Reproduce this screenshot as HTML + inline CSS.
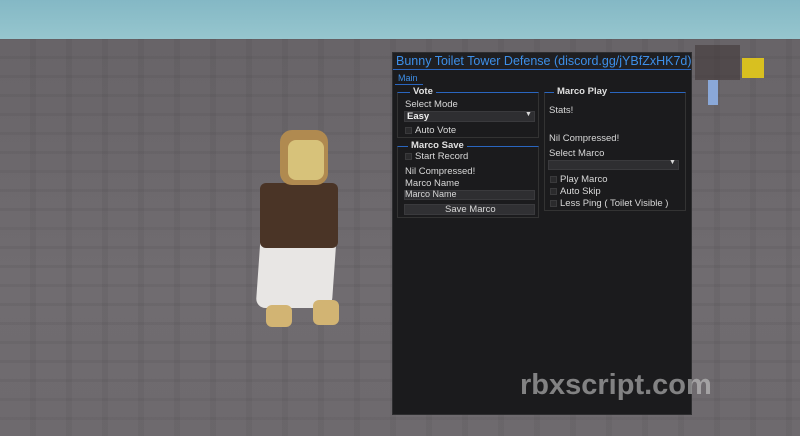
<!DOCTYPE html>
<html><head><style>
*{margin:0;padding:0;box-sizing:border-box}
body{width:800px;height:436px;overflow:hidden;position:relative;background:#6b676b;font-family:"Liberation Sans",sans-serif}
.a{position:absolute}
.t{color:#d8d8d8;font-size:9.5px;position:absolute;white-space:nowrap}
.cb{position:absolute;width:7px;height:7px;background:#2a2a2c;border:1px solid #3a3a3c}
.dd{position:absolute;background:#2e2e31;border:1px solid #3a3a3d}
</style></head><body>
<div class="a" style="left:0;top:0;width:800px;height:39px;background:linear-gradient(#84b8c5,#96c6ce)"></div>
<div class="a" style="left:0;top:39px;width:800px;height:397px;background:
repeating-linear-gradient(90deg,transparent 0 30px,rgba(50,48,50,.08) 30px 36px),
repeating-linear-gradient(0deg,transparent 0 16px,rgba(50,48,50,.08) 16px 19px),
linear-gradient(#686468,#706c70 60%,#6e6a6e)"></div>
<div class="a" style="left:258px;top:240px;width:76px;height:68px;background:#e8e6e4;border-radius:4px 4px 10px 10px;transform:skewX(-4deg)"></div>
<div class="a" style="left:260px;top:183px;width:78px;height:65px;background:#4a3426;border-radius:6px"></div>
<div class="a" style="left:280px;top:130px;width:48px;height:55px;background:#b08a50;border-radius:12px"></div>
<div class="a" style="left:288px;top:140px;width:36px;height:40px;background:#d7c27a;border-radius:8px"></div>
<div class="a" style="left:266px;top:305px;width:26px;height:22px;background:#d2b473;border-radius:6px"></div>
<div class="a" style="left:313px;top:300px;width:26px;height:25px;background:#d2b473;border-radius:6px"></div>
<div class="a" style="left:695px;top:45px;width:45px;height:35px;background:#3a3030;opacity:.5"></div>
<div class="a" style="left:742px;top:58px;width:22px;height:20px;background:#d8c020"></div>
<div class="a" style="left:708px;top:80px;width:10px;height:25px;background:#8aa8d8"></div>
<div class="a" style="left:392px;top:52px;width:300px;height:363px;background:#1b1b1d;border:1px solid #2e2e30"></div>
<div class="a" style="left:393px;top:53px;width:298px;height:17px;background:#1f1f22;border-bottom:1px solid #2a66c0"></div>
<div class="t" style="left:396px;top:54px;font-size:12.5px;color:#3d8fe8">Bunny Toilet Tower Defense (discord.gg/jYBfZxHK7d)</div>
<div class="t" style="left:398px;top:73px;color:#3d8fe8;font-size:9px">Main</div>
<div class="a" style="left:395px;top:84px;width:28px;height:1px;background:#2a66c0"></div>
<div class="a" style="left:397px;top:92px;width:142px;height:46px;border:1px solid #333;border-top:1px solid #2a66c0"></div>
<div class="t" style="left:410px;top:86px;background:#1b1b1d;padding:0 3px;font-weight:bold;color:#e0e0e0">Vote</div>
<div class="t" style="left:405px;top:99px">Select Mode</div>
<div class="dd" style="left:404px;top:111px;width:131px;height:11px"></div>
<div class="t" style="left:407px;top:111px;color:#eee;font-weight:bold">Easy</div>
<div class="t" style="left:525px;top:111px;font-size:7px">▼</div>
<div class="cb" style="left:405px;top:127px"></div>
<div class="t" style="left:415px;top:125px">Auto Vote</div>
<div class="a" style="left:397px;top:146px;width:142px;height:72px;border:1px solid #333;border-top:1px solid #2a66c0"></div>
<div class="t" style="left:408px;top:140px;background:#1b1b1d;padding:0 3px;font-weight:bold;color:#e0e0e0">Marco Save</div>
<div class="cb" style="left:405px;top:153px"></div>
<div class="t" style="left:415px;top:151px">Start Record</div>
<div class="t" style="left:405px;top:166px">Nil Compressed!</div>
<div class="t" style="left:405px;top:178px">Marco Name</div>
<div class="dd" style="left:404px;top:190px;width:131px;height:10px"></div>
<div class="t" style="left:405px;top:189px;font-size:9px">Marco Name</div>
<div class="dd" style="left:404px;top:204px;width:131px;height:11px;background:#303033"></div>
<div class="t" style="left:445px;top:204px">Save Marco</div>
<div class="a" style="left:544px;top:92px;width:142px;height:119px;border:1px solid #333;border-top:1px solid #2a66c0"></div>
<div class="t" style="left:554px;top:86px;background:#1b1b1d;padding:0 3px;font-weight:bold;color:#e0e0e0">Marco Play</div>
<div class="t" style="left:549px;top:105px">Stats!</div>
<div class="t" style="left:549px;top:133px">Nil Compressed!</div>
<div class="t" style="left:549px;top:148px">Select Marco</div>
<div class="dd" style="left:548px;top:160px;width:131px;height:10px"></div>
<div class="t" style="left:669px;top:159px;font-size:7px">▼</div>
<div class="cb" style="left:550px;top:176px"></div>
<div class="t" style="left:560px;top:174px">Play Marco</div>
<div class="cb" style="left:550px;top:188px"></div>
<div class="t" style="left:560px;top:186px">Auto Skip</div>
<div class="cb" style="left:550px;top:200px"></div>
<div class="t" style="left:560px;top:198px">Less Ping ( Toilet Visible )</div>
<div class="t" style="left:520px;top:369px;font-size:29px;font-weight:bold;color:rgba(200,200,200,.6)">rbxscript.com</div>
</body></html>
